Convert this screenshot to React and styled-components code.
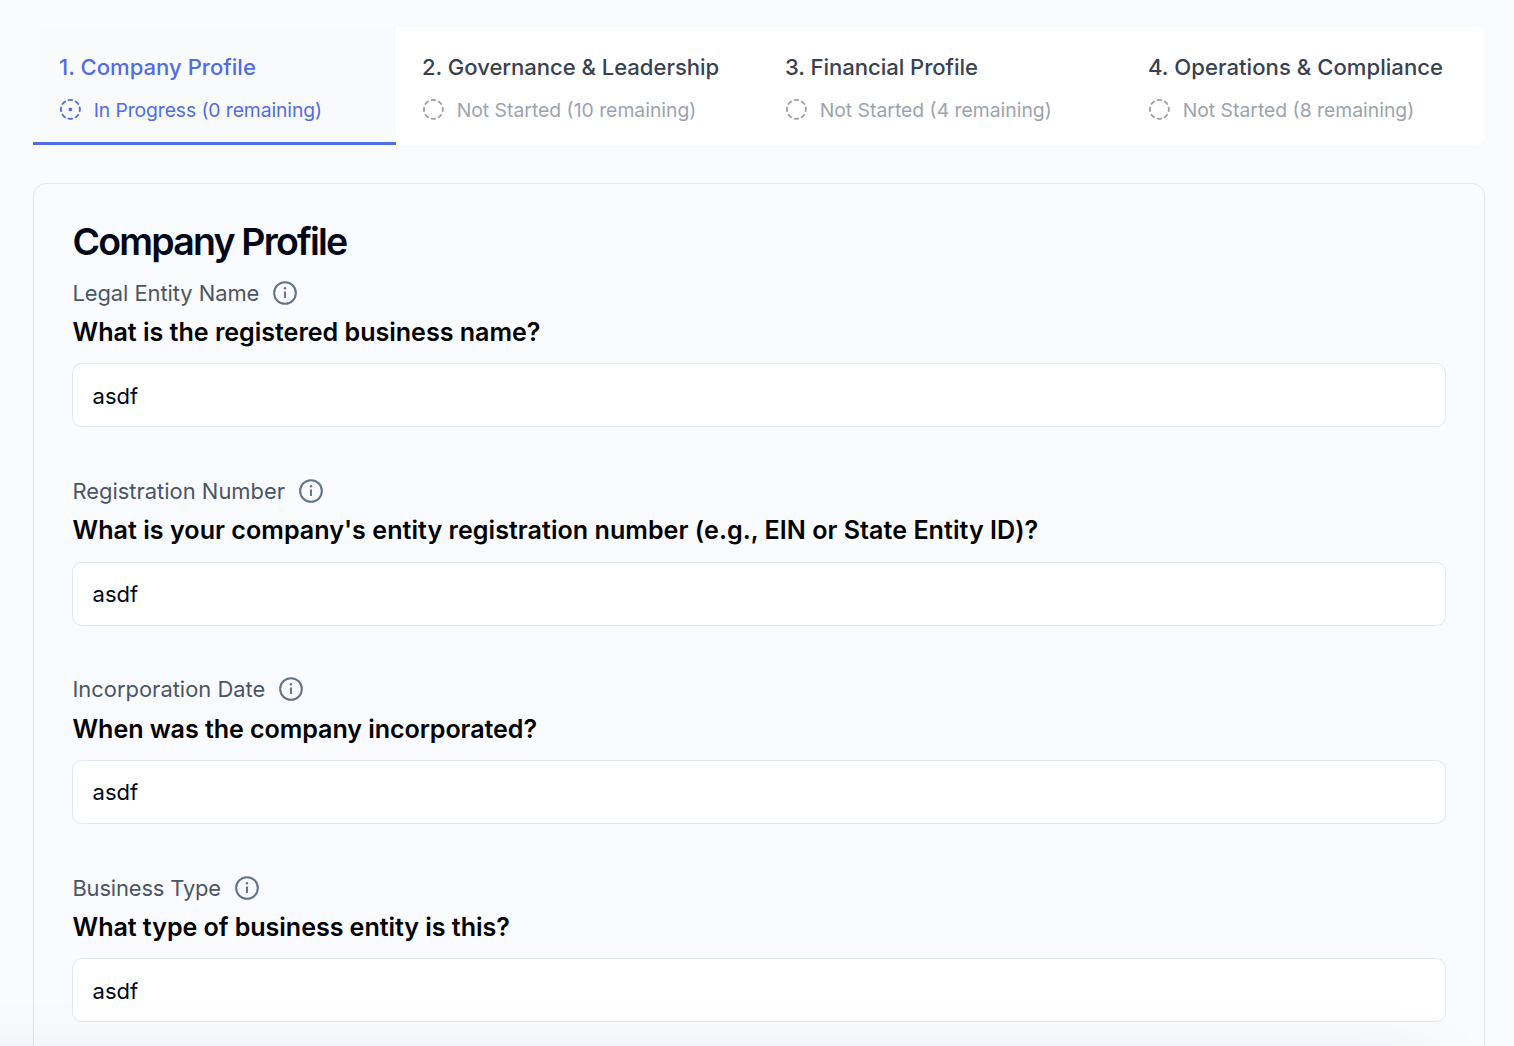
import React from 'react';
import styled, { createGlobalStyle } from 'styled-components';
import { CircleDashed, CircleDotDashed } from 'lucide-react';

const GlobalStyle = createGlobalStyle`
  * { box-sizing: border-box; }
  body {
    margin: 0;
    background: #fafbff;
    font-family: Inter, "Liberation Sans", sans-serif;
    overflow: hidden;
    -webkit-font-smoothing: antialiased;
  }
`;

const Page = styled.main`
  height: 100vh;
  overflow: hidden;
  padding: 27px 29px 0 33px;
`;

const Tabs = styled.nav`
  display: grid;
  grid-template-columns: repeat(4, 363px);
  height: 118px;
  border-radius: 10px 10px 10px 0;
  overflow: hidden;
  background: #fff;
`;

const Tab = styled.button`
  display: flex;
  flex-direction: column;
  align-items: flex-start;
  padding: 24px 0 0 26px;
  border: 0;
  border-bottom: 3px solid ${(p) => (p.$active ? '#506ce6' : 'transparent')};
  background: ${(p) => (p.$active ? '#f9fafb' : '#fff')};
  color: ${(p) => (p.$active ? '#506ce6' : '#374151')};
  font: inherit;
  text-align: left;
`;

const TabTitle = styled.span`
  font-size: 22.1px;
  font-weight: 500;
  line-height: 32px;
  letter-spacing: ${(p) => p.$tracking || 0}px;
  white-space: nowrap;
`;

const TabStatus = styled.span`
  display: flex;
  align-items: center;
  gap: 12.3px;
  margin-top: 11px;
  font-size: 19.35px;
  line-height: 32px;
  letter-spacing: ${(p) => (p.$active ? -0.1 : 0)}px;
  white-space: nowrap;
  color: ${(p) => (p.$active ? '#506ce6' : '#9ca3af')};

  svg {
    margin: 0 0 2px -0.4px;
  }
`;

const Card = styled.section`
  width: 1452px;
  height: 1100px;
  margin-top: 38px;
  padding: 34px 38px 0;
  border: 1px solid #e2e8f0;
  border-radius: 13px;
  box-shadow: 0 1px 3px rgba(15, 23, 42, 0.04);
`;

const Heading = styled.h1`
  margin: 0 0 10.8px;
  padding-left: 0.4px;
  color: #020817;
  font-size: 37.5px;
  font-weight: 600;
  line-height: 48px;
  letter-spacing: -1.8px;
`;

const Fields = styled.div`
  display: flex;
  flex-direction: column;
  gap: 47.73px;
`;

const Field = styled.div`
  display: flex;
  flex-direction: column;
`;

const Label = styled.div`
  display: flex;
  align-items: center;
  gap: 13px;
  margin-bottom: 0.3px;
  padding-left: 0.4px;
  color: #4b5563;
  font-size: 21.95px;
  line-height: 32px;
  letter-spacing: ${(p) => p.$tracking || 0}px;
`;

const Question = styled.label`
  margin-bottom: 8.3px;
  padding-left: 0.6px;
  color: #000;
  font-size: 25.1px;
  font-weight: 600;
  line-height: 46px;
  letter-spacing: ${(p) => p.$tracking || 0}px;
`;

const Input = styled.input`
  width: 100%;
  height: 64px;
  padding: 0.4px 20px 0 19.6px;
  border: 1px solid #e2e8f0;
  border-radius: 9.75px;
  outline: 0;
  background: #fff;
  color: #020817;
  font-family: inherit;
  font-size: 22px;
`;

const BottomShade = styled.div`
  position: fixed;
  left: -100px;
  right: 75px;
  top: calc(100vh + 12px);
  height: 100px;
  box-shadow: 0 0 70px rgba(15, 15, 40, 0.07);
  pointer-events: none;
`;

function InfoIcon() {
  return (
    <svg width="26" height="26" viewBox="0 0 24 24" fill="none" stroke="#64748b" strokeWidth="1.9">
      <circle cx="12" cy="12" r="10" />
      <path d="M11 11.6H12V16.7" strokeWidth="1.8" />
      <circle cx="12" cy="7.7" r="1.15" fill="#64748b" stroke="none" />
    </svg>
  );
}

const tabs = [
  { title: '1. Company Profile', status: 'In Progress (0 remaining)', active: true },
  { title: '2. Governance & Leadership', status: 'Not Started (10 remaining)', tracking: -0.05 },
  { title: '3. Financial Profile', status: 'Not Started (4 remaining)', tracking: -0.05 },
  { title: '4. Operations & Compliance', status: 'Not Started (8 remaining)', tracking: 0.04 },
];

const fields = [
  {
    id: 'name',
    label: 'Legal Entity Name',
    labelTracking: -0.07,
    question: 'What is the registered business name?',
    questionTracking: -0.03,
  },
  {
    id: 'number',
    label: 'Registration Number',
    question: "What is your company's entity registration number (e.g., EIN or State Entity ID)?",
    questionTracking: 0.025,
  },
  {
    id: 'date',
    label: 'Incorporation Date',
    question: 'When was the company incorporated?',
    questionTracking: -0.08,
  },
  {
    id: 'type',
    label: 'Business Type',
    labelTracking: -0.16,
    question: 'What type of business entity is this?',
    questionTracking: -0.06,
  },
];

export default function App() {
  return (
    <>
      <GlobalStyle />
      <Page>
        <Tabs>
          {tabs.map(({ title, status, active, tracking }) => {
            const Icon = active ? CircleDotDashed : CircleDashed;
            return (
              <Tab key={title} $active={active}>
                <TabTitle $tracking={tracking}>{title}</TabTitle>
                <TabStatus $active={active}>
                  <Icon size={22.75} strokeWidth={2} />
                  {status}
                </TabStatus>
              </Tab>
            );
          })}
        </Tabs>
        <Card>
          <Heading>Company Profile</Heading>
          <Fields>
            {fields.map(({ id, label, labelTracking, question, questionTracking }) => (
              <Field key={id}>
                <Label $tracking={labelTracking}>
                  {label}
                  <InfoIcon />
                </Label>
                <Question htmlFor={id} $tracking={questionTracking}>
                  {question}
                </Question>
                <Input id={id} defaultValue="asdf" />
              </Field>
            ))}
          </Fields>
        </Card>
      </Page>
      <BottomShade />
    </>
  );
}
